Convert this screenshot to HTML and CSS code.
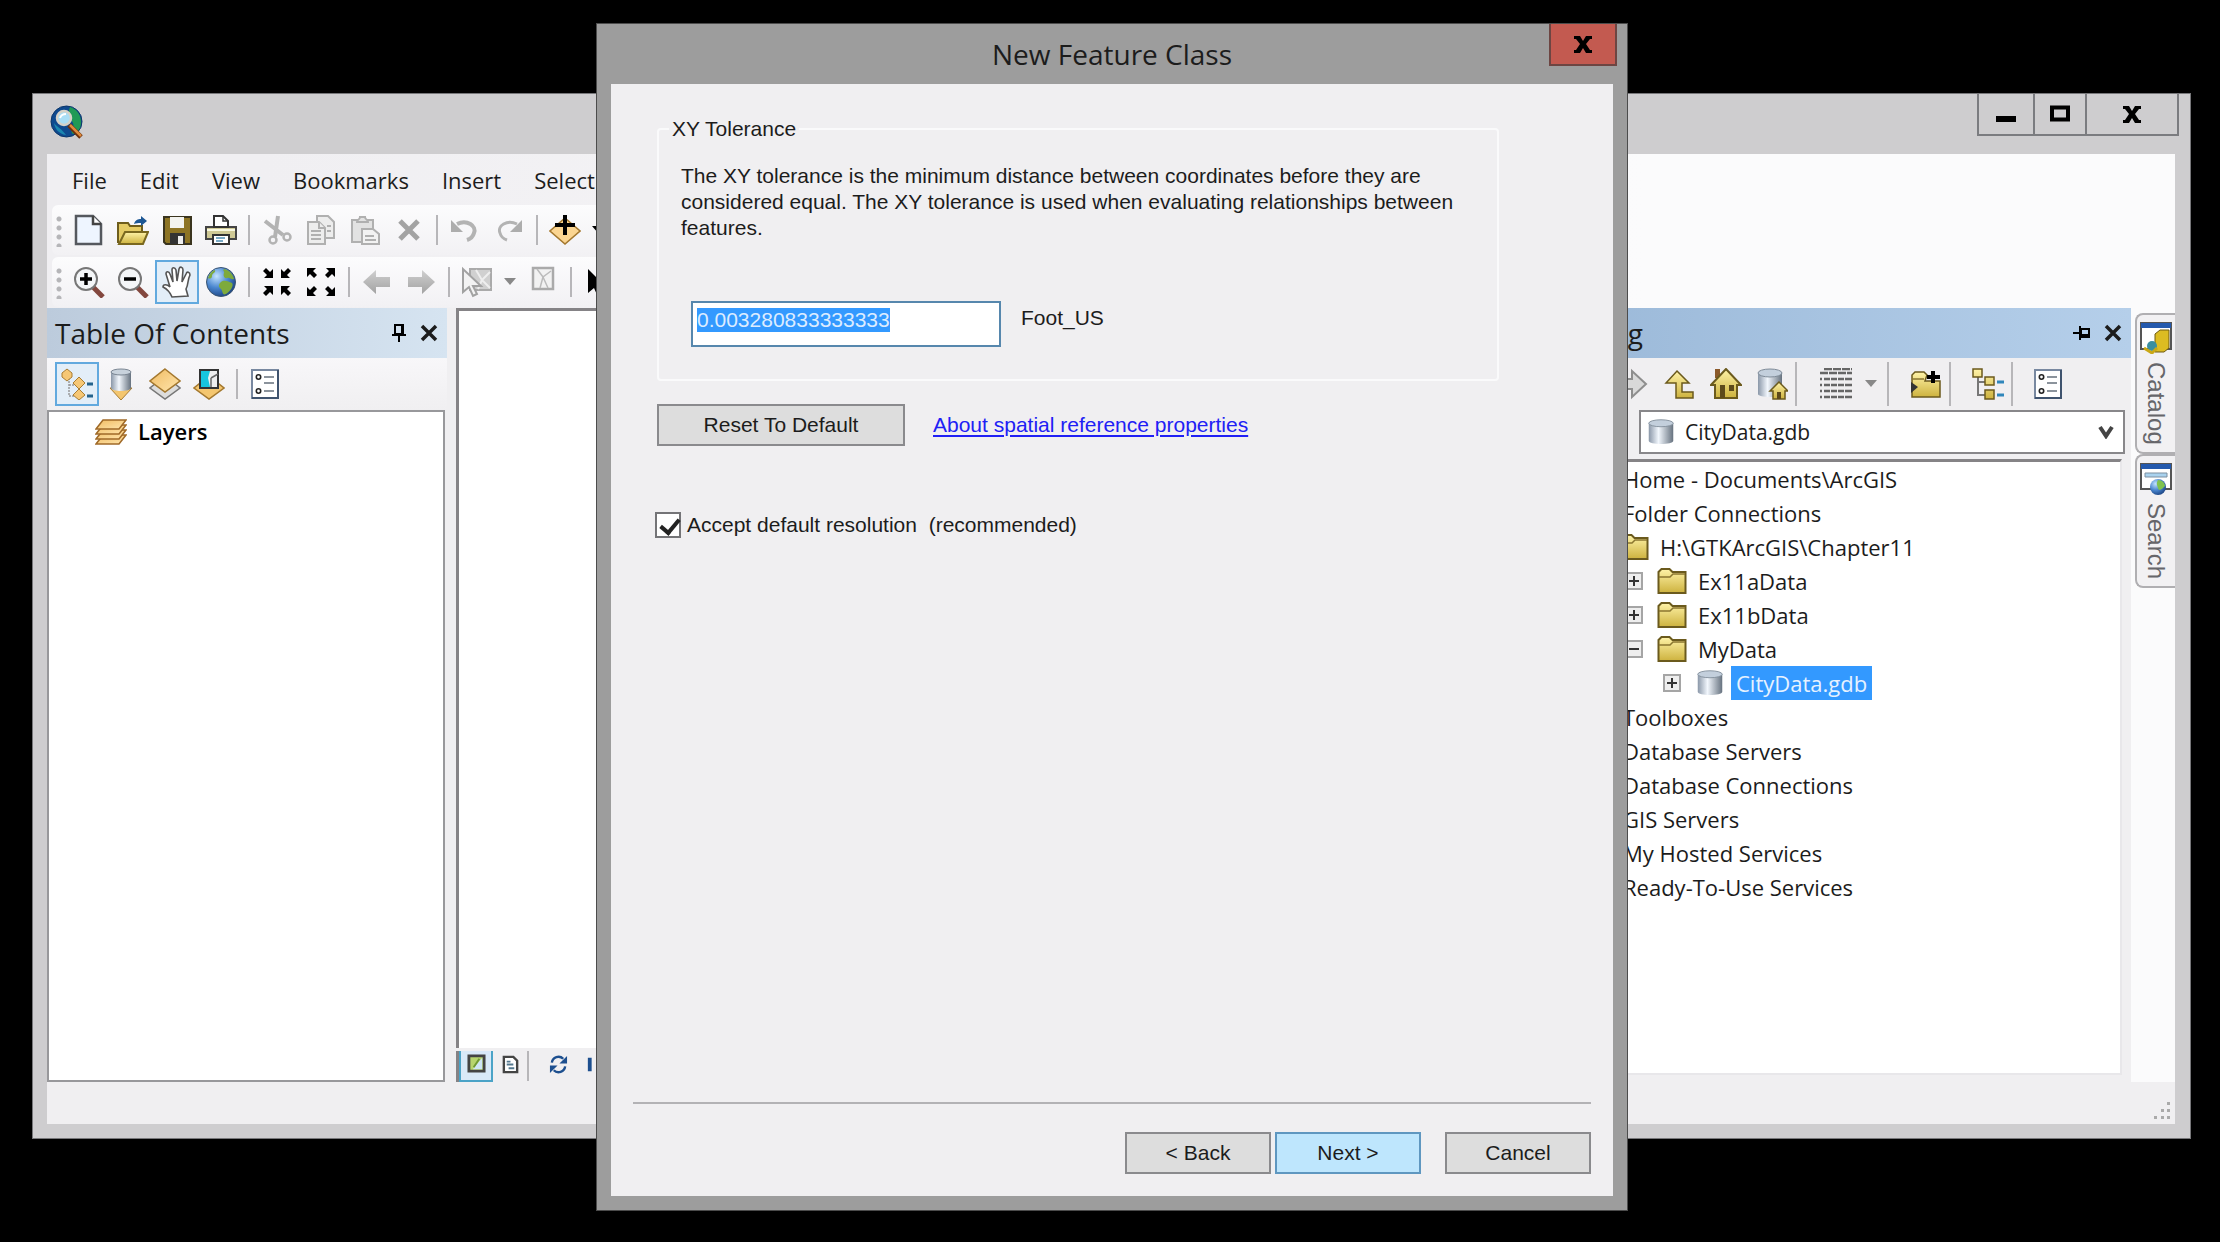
FILE: index.html
```html
<!DOCTYPE html>
<html lang="en">
<head>
<meta charset="utf-8">
<title>New Feature Class</title>
<link rel="stylesheet" href="styles.css">
</head>
<body>
<svg class="defs" aria-hidden="true">
  <defs>
    <linearGradient id="gold" x1="0" y1="0" x2="0" y2="1"><stop offset="0" stop-color="#fff3a8"/><stop offset="1" stop-color="#cdb23e"/></linearGradient>
    <linearGradient id="amber" x1="0" y1="0" x2="1" y2="1"><stop offset="0" stop-color="#f0bb62"/><stop offset="1" stop-color="#ffe6ae"/></linearGradient>
    <linearGradient id="steel"><stop offset="0" stop-color="#8a97a8"/><stop offset=".4" stop-color="#f2f7fd"/><stop offset="1" stop-color="#66727f"/></linearGradient>
    <radialGradient id="sea" cx=".35" cy=".3" r=".8"><stop offset="0" stop-color="#c4e4ff"/><stop offset=".5" stop-color="#4a86cf"/><stop offset="1" stop-color="#153a78"/></radialGradient>
    <linearGradient id="grey" x1="0" y1="0" x2="0" y2="1"><stop offset="0" stop-color="#d0d0d0"/><stop offset="1" stop-color="#a2a2a2"/></linearGradient>
    <symbol id="cylinder" viewBox="0 0 32 32"><path d="M2 6v20c0 5 28 5 28 0V6z" fill="url(#steel)"/><ellipse cx="16" cy="6" rx="14" ry="4" fill="#c3cfdc" stroke="#7f8b98"/></symbol>
    <symbol id="folder" viewBox="0 0 30 28"><path d="M1.500 26V5l3-3h8l3 3h13v21z" fill="url(#gold)" stroke="#6b5a1d" stroke-width="2"/><path d="M2 10h11l3-3h12" fill="none" stroke="#8a7630" stroke-width="1.500"/></symbol>
    <symbol id="list" viewBox="0 0 32 32"><path d="M3 2h26v28H3z" fill="#fff" stroke="#7888a0" stroke-width="2"/><path d="M29 2v28H3" fill="none" stroke="#3f536e" stroke-width="2"/><circle cx="9.500" cy="9" r="2.200" fill="none" stroke="#222" stroke-width="1.600"/><circle cx="9.500" cy="23" r="2.200" fill="none" stroke="#222" stroke-width="1.600"/><path d="M15 9h10M15 15h10M15 23h10" stroke="#8b939c" stroke-width="2"/></symbol>
    <symbol id="globe" viewBox="0 0 32 32"><circle cx="16" cy="16" r="14.500" fill="url(#sea)" stroke="#3b5572"/><path d="M19 3c5 1 9 5 10 10-3 1-4-2-7-1s-4-3-3-5-2-2 0-4zM15 17c3-4 8-2 12 0 2 2-1 8-6 11-4 2-3-3-5-5s-3-3-1-6zM3 12c1-4 4-7 7-8 1 3-3 3-3 6s-3 3-4 2z" fill="#7eaa3c"/></symbol>
    <symbol id="cross" viewBox="0 0 20 20"><path d="M3 3l14 14M17 3L3 17" stroke="currentColor" stroke-width="3.500"/></symbol>
    <symbol id="down" viewBox="0 0 12 8"><path d="M0 0h12L6 7z" fill="currentColor"/></symbol>
    <symbol id="plus" viewBox="0 0 18 18"><path d="M1 1h16v16H1z" fill="#eee" stroke="#a5a5a5" stroke-width="2"/><path d="M4 9h10M9 4v10" stroke="#333" stroke-width="2"/></symbol>
    <symbol id="minus" viewBox="0 0 18 18"><path d="M1 1h16v16H1z" fill="#eee" stroke="#a5a5a5" stroke-width="2"/><path d="M4 9h10" stroke="#333" stroke-width="2"/></symbol>
  </defs>
</svg>

<div class="desktop">
  <div class="window">
    <header class="titlebar">
      <svg class="app-icon" viewBox="0 0 34 34"><circle cx="16.500" cy="16.500" r="15.500" fill="#0f4a8f" stroke="#0b3569"/><path d="M20 2c7 2 11 8 11 15s-3 10-8 12c-4-2 2-7 0-11s-6-9-3-16z" fill="#1f9a55"/><path d="M4 18c3 4 8 6 12 12C9 29 5 24 4 18z" fill="#1b87b0"/><path d="M19 20l12 12" stroke="#6b300d" stroke-width="5"/><path d="M20 20l11 11" stroke="#e08a3d" stroke-width="2.500"/><circle cx="14" cy="13" r="7" fill="#a9def5" stroke="#d6d2c8" stroke-width="2.500"/><path d="M10 13c1-3 3-4 6-4" stroke="#fff" stroke-width="2" fill="none"/></svg>
      <div class="window-controls">
        <button class="control control-min" aria-label="Minimize"><svg width="20" height="18"><path d="M0 11h20v6H0z"/></svg></button>
        <button class="control control-max" aria-label="Maximize"><svg width="20" height="18"><path d="M2 2.500h16v12H2z" fill="none" stroke="#000" stroke-width="4"/></svg></button>
        <button class="control control-close" aria-label="Close"><svg width="18" height="17" viewBox="0 0 18 17"><path d="M0 0h6l3 5 3-5h6v3h-2l-4 5 4 6h2v3h-6l-3-5-3 5H0v-3h2l4-6-4-5H0z"/></svg></button>
      </div>
    </header>

    <div class="client">
      <div class="bars">
        <nav class="menu">
          <button>File</button><button>Edit</button><button>View</button><button>Bookmarks</button><button>Insert</button><button>Selection</button>
        </nav>
        <div class="toolbar">
          <span class="grip"></span>
          <button class="tool" aria-label="New"><svg viewBox="0 0 32 32"><path d="M3 2h17l8 8v20H3z" fill="#eef5ff" stroke="#55585e" stroke-width="2.500"/><path d="M20 2v8h8" fill="#fff" stroke="#444" stroke-width="2.500"/></svg></button>
          <button class="tool" aria-label="Open"><svg viewBox="0 0 32 32"><path d="M1 29V9h10l2 3h12v6" fill="#e5cc65" stroke="#6e5d1c" stroke-width="2"/><path d="M2 30l6-12h23l-5 12z" fill="url(#gold)" stroke="#7a681f" stroke-width="2"/><path d="M17 10c1-4 4-5 7-5V2l6 5-6 5V9c-3 0-5 0-7 1z" fill="#1d5794"/></svg></button>
          <button class="tool" aria-label="Save"><svg viewBox="0 0 32 32"><path d="M3 3h27v27H5l-2-2z" fill="#8d7424" stroke="#3a341e" stroke-width="2"/><path d="M9 3h14v11H9z" fill="#f3f3ef"/><path d="M9 19h15v11H9z" fill="#333"/><path d="M17 22h5v8h-5z" fill="#eee"/></svg></button>
          <button class="tool" aria-label="Print"><svg viewBox="0 0 32 32"><path d="M1 13h30v12H1z" fill="#cfc995" stroke="#444" stroke-width="2"/><path d="M2 16h28" stroke="#f8f8e0" stroke-width="2"/><path d="M9 13V2h9l5 5v6z" fill="#fff" stroke="#333" stroke-width="2"/><path d="M18 2v5h5" fill="none" stroke="#333" stroke-width="1.500"/><path d="M8 21h16v9H8z" fill="#fff" stroke="#333" stroke-width="2"/><path d="M11 24h9M11 27h7" stroke="#4d8fb5" stroke-width="1.500"/></svg></button>
          <span class="sep"></span>
          <button class="tool" disabled aria-label="Cut"><svg viewBox="0 0 32 32" fill="none" stroke="#b3b3b3"><path d="M4 7l18 14M17 2l-3 21" stroke-width="4"/><circle cx="12" cy="26" r="3.500" stroke-width="2.500"/><circle cx="26" cy="23" r="3.500" stroke-width="2.500"/></svg></button>
          <button class="tool" disabled aria-label="Copy"><svg viewBox="0 0 32 32" fill="#ededed" stroke="#b0b0b0" stroke-width="2"><path d="M12 2h11l6 6v16H12z"/><path d="M3 8h11l6 6v16H3z"/><path d="M14 8v6h6M6 17h10M6 21h10M6 25h10M22 12h4M22 17h4" /></svg></button>
          <button class="tool" disabled aria-label="Paste"><svg viewBox="0 0 32 32" fill="#e2e2e2" stroke="#b0b0b0" stroke-width="2"><path d="M3 6h21v22H3z"/><path d="M8 8c0-3 3-2 3-5h5c0 3 3 2 3 5z"/><path d="M13 15h11l6 5v10H13z" fill="#f2f2f2"/><path d="M16 22h9M16 26h11"/></svg></button>
          <button class="tool" disabled aria-label="Delete"><svg viewBox="0 0 32 32"><path d="M7 7l18 18M25 7L7 25" stroke="#a3a3a3" stroke-width="5"/></svg></button>
          <span class="sep"></span>
          <button class="tool" disabled aria-label="Undo"><svg viewBox="0 0 32 32"><path d="M8 10c10-5 20 2 17 9-1 4-4 6-7 7" fill="none" stroke="#b3b3b3" stroke-width="4"/><path d="M2 6v12h12z" fill="#adadad"/></svg></button>
          <button class="tool" disabled aria-label="Redo"><svg viewBox="0 0 32 32"><path d="M24 10C14 5 4 12 7 19c1 4 4 6 7 7" fill="none" stroke="#b3b3b3" stroke-width="3"/><path d="M29 6v12H17z" fill="#adadad"/></svg></button>
          <span class="sep"></span>
          <button class="tool" aria-label="Add data"><svg viewBox="0 0 32 32"><path d="M16 4l15 13-15 13L1 17z" fill="#fbd591" stroke="#a4782e" stroke-width="1.500"/><path d="M16 1v20M6 11h20" stroke="#000" stroke-width="4"/></svg></button>
          <svg class="caret dark"><use href="#down"/></svg>
        </div>
        <div class="toolbar">
          <span class="grip"></span>
          <button class="tool" aria-label="Zoom in"><svg viewBox="0 0 32 32"><path d="M20 21l10 10" stroke="#83473e" stroke-width="5"/><circle cx="13" cy="13" r="11" fill="#f4f6f8" stroke="#777" stroke-width="2"/><path d="M7 13h12M13 7v12" stroke="#000" stroke-width="3.500"/></svg></button>
          <button class="tool" aria-label="Zoom out"><svg viewBox="0 0 32 32"><path d="M20 21l10 10" stroke="#83473e" stroke-width="5"/><circle cx="13" cy="13" r="11" fill="#f4f6f8" stroke="#777" stroke-width="2"/><path d="M7 13h12" stroke="#000" stroke-width="3.500"/></svg></button>
          <button class="tool active" aria-label="Pan"><svg viewBox="0 0 32 32"><path d="M11 31c-2-5-5-8-9-10 0-3 4-3 7 0L5 8c0-3 3-3 4 0l3 8-1-12c0-3 3-3 4 0l1 11 2-12c1-3 4-2 4 1l-1 12 4-8c1-3 4-2 4 1-3 6-1 8-4 14l2 7z" fill="#fff" stroke="#555" stroke-width="1.600"/></svg></button>
          <button class="tool" aria-label="Full extent"><svg><use href="#globe"/></svg></button>
          <span class="sep"></span>
          <button class="tool" aria-label="Fixed zoom in"><svg viewBox="0 0 32 32"><path d="M12 3v9H3l3-3-4-4 3-3 4 4zM20 3v9h9l-3-3 4-4-3-3-4 4zM12 29v-9H3l3 3-4 4 3 3 4-4zM20 29v-9h9l-3 3 4 4-3 3-4-4z"/></svg></button>
          <button class="tool" aria-label="Fixed zoom out"><svg viewBox="0 0 32 32"><path d="M2 11V2h9L8 5l4 4-3 3-4-4zM30 11V2h-9l3 3-4 4 3 3 4-4zM2 21v9h9l-3-3 4-4-3-3-4 4zM30 21v9h-9l3-3-4-4 3-3 4 4z"/></svg></button>
          <span class="sep"></span>
          <button class="tool" disabled aria-label="Back"><svg viewBox="0 0 32 32"><path d="M2 16L15 4v7h14v10H15v7z" fill="url(#grey)"/></svg></button>
          <button class="tool" disabled aria-label="Forward"><svg viewBox="0 0 32 32"><path d="M30 16L17 4v7H3v10h14v7z" fill="url(#grey)"/></svg></button>
          <span class="sep"></span>
          <button class="tool" disabled aria-label="Select features"><svg viewBox="0 0 32 32"><path d="M9 3h21v21H9z" fill="#d0d0d0" stroke="#aaa" stroke-width="2"/><path d="M15 4l6 10-4 9M29 6l-8 8 8 8" fill="none" stroke="#eee" stroke-width="2"/><path d="M2 3v23l6-5 4 9 4-2-4-8h8z" fill="#f3f3f3" stroke="#a2a2a2" stroke-width="2"/></svg></button>
          <svg class="caret"><use href="#down"/></svg>
          <button class="tool" disabled aria-label="Clear selection"><svg viewBox="0 0 32 32"><path d="M6 2h20v21H6z" fill="#f2f2f2" stroke="#aaa" stroke-width="2.500"/><path d="M10 3l6 8-3 11M24 5l-8 6 5 11" fill="none" stroke="#bbb" stroke-width="1.500"/></svg></button>
          <span class="sep"></span>
          <button class="tool" aria-label="Select elements"><svg viewBox="0 0 32 32"><path d="M5 3v24l6-5 4 9 4-2-4-8h8z"/></svg></button>
        </div>
      </div>

      <div class="workspace">
        <section class="toc">
          <div class="pane-title toc-title">
            <h2>Table Of Contents</h2>
            <button aria-label="Auto hide"><svg width="16" height="18" viewBox="0 0 16 18"><path d="M4 1h8v9H4z" fill="none" stroke="#000" stroke-width="2"/><path d="M10 1h3v9h-3zM1 10h14v2H1zM7 12h2v6H7z"/></svg></button>
            <button aria-label="Close"><svg width="20" height="20"><use href="#cross"/></svg></button>
          </div>
          <div class="pane-tools">
            <button class="tool active" aria-label="List by drawing order"><svg viewBox="0 0 32 32"><path d="M8 10v18h12M8 17h10" fill="none" stroke="#999" stroke-width="1.500" stroke-dasharray="2 1"/><g fill="#f6c775" stroke="#a97d33"><path d="M6 1l5 4v4l-5 4-5-4V5z"/><path d="M18 9l6 6-6 6-6-6zM18 21l6 6-6 5-6-5z"/></g><path d="M26 16h6M26 28h6" stroke="#25638c" stroke-width="3"/></svg></button>
            <button class="tool" aria-label="List by source"><svg viewBox="0 0 32 32"><path d="M5 20h22L16 32z" fill="#f4c66f" stroke="#a97d33"/><path d="M6 4v16c0 4 20 4 20 0V4z" fill="url(#steel)"/><ellipse cx="16" cy="4" rx="10" ry="3" fill="#c8d2dc" stroke="#7a8592"/></svg></button>
            <button class="tool" aria-label="List by visibility"><svg viewBox="0 0 32 32"><path d="M16 8l15 12-15 11L1 20z" fill="#ddd" stroke="#777" stroke-width="1.500"/><path d="M16 1l15 12-15 11L1 13z" fill="url(#amber)" stroke="#a4782e" stroke-width="1.500"/></svg></button>
            <button class="tool" aria-label="List by selection"><svg viewBox="0 0 32 32"><path d="M16 8l15 12-15 11L1 20z" fill="#f4c66f" stroke="#a4782e" stroke-width="1.500"/><path d="M7 2h18v18H7z" fill="#eee" stroke="#333" stroke-width="2"/><path d="M8 3h9l-2 7 2 9H8z" fill="#17c5dd"/><path d="M18 10l7-4M18 10v9" stroke="#666" stroke-width="1.500"/></svg></button>
            <span class="sep"></span>
            <button class="tool" aria-label="Options"><svg><use href="#list"/></svg></button>
          </div>
          <div class="layers">
            <svg viewBox="0 0 32 26"><g fill="url(#amber)" stroke="#a06a28" stroke-width="1.500"><path d="M8 16h23l-7 9H1z"/><path d="M8 11h23l-7 9H1z"/><path d="M8 6h23l-7 9H1z"/><path d="M8 1h23l-7 9H1z"/></g></svg>
            <strong>Layers</strong>
          </div>
        </section>

        <section class="map">
          <div class="canvas"></div>
          <div class="view-bar">
            <button class="view active" aria-label="Data view"><svg viewBox="0 0 20 20"><path d="M2 2h16v16H2z" fill="#b7d56d" stroke="#444" stroke-width="3"/><path d="M16 4L6 16h10z" fill="#cfe6f5"/><path d="M13 5L7 14" stroke="#6f9a35" stroke-width="2"/></svg></button>
            <button class="view" aria-label="Layout view"><svg viewBox="0 0 20 20"><path d="M3 2h10l4 4v12H3z" fill="#fff" stroke="#444" stroke-width="2.500"/><path d="M6 7h4M6 10h7M8 14h6" stroke="#54788f" stroke-width="2"/></svg></button>
            <span class="sep"></span>
            <button class="view refresh" aria-label="Refresh"><svg viewBox="0 0 20 20"><path d="M3 8a7 7 0 0 1 12-4M17 12a7 7 0 0 1-12 4" fill="none" stroke="#1d4f8f" stroke-width="2.500"/><path d="M19 1v8h-8zM1 19v-8h8z" fill="#1d4f8f"/></svg></button>
            <button class="view pause" aria-label="Pause drawing"><svg viewBox="0 0 20 20"><path d="M3 3h4v14H3zM12 3h4v14h-4z" fill="#1d4f8f"/></svg></button>
          </div>
        </section>

        <section class="catalog">
          <div class="pane-title catalog-title">
            <h2>Catalog</h2>
            <button aria-label="Pin"><svg width="18" height="16" viewBox="0 0 18 16"><path d="M8 4h8v8H8z" fill="none" stroke="#000" stroke-width="2"/><path d="M8 9h9v3H8zM6 1h2v14H6zM0 7h6v2H0z"/></svg></button>
            <button aria-label="Close"><svg width="20" height="20"><use href="#cross"/></svg></button>
          </div>
          <div class="pane-tools catalog-tools">
            <button class="tool" disabled aria-label="Forward"><svg viewBox="0 0 32 32"><path d="M2 11h12V3l14 13-14 13v-8H2z" fill="#d9d9d9" stroke="#8e8e8e" stroke-width="2"/></svg></button>
            <button class="tool" aria-label="Up one level"><svg viewBox="0 0 32 32"><path d="M13 3l12 12h-7v9h11v6H12V15H2z" fill="url(#gold)" stroke="#6b5a1d" stroke-width="1.500"/></svg></button>
            <button class="tool" aria-label="Home folder"><svg viewBox="0 0 32 32"><path d="M5 1h5v9H5z" fill="#8b5a2b"/><path d="M16 1L1 17h4v13h22V17h4z" fill="url(#gold)" stroke="#6b5a1d" stroke-width="2"/><path d="M10 17h5v13h-5zM19 17h5v6h-5z" fill="#5d4a1b"/></svg></button>
            <button class="tool" aria-label="Default geodatabase"><svg viewBox="0 0 32 32"><path d="M2 5v21c0 4 24 4 24 0V5z" fill="url(#steel)"/><ellipse cx="14" cy="5" rx="12" ry="4" fill="#c3cfdc" stroke="#7f8b98"/><path d="M23 14l-9 9h3v8h12v-8h3z" fill="url(#gold)" stroke="#6b5a1d" stroke-width="1.500"/><path d="M21 24h4v7h-4z" fill="#5d4a1b"/></svg></button>
            <span class="sep tall"></span>
            <button class="tool table-tool" aria-label="Contents view"><svg viewBox="0 0 32 32" stroke="#666" fill="none"><path d="M4 1h28M0 5h32" stroke-width="2.500" stroke-dasharray="8 1"/><path d="M0 11h32M0 17h32M0 23h32M0 29h32" stroke-width="2.500" stroke-dasharray="2 2 6 1 6 1 6 1 7 0"/></svg></button>
            <svg class="caret"><use href="#down"/></svg>
            <span class="sep tall"></span>
            <button class="tool connect" aria-label="Connect to folder"><svg viewBox="0 0 32 32"><path d="M2 29V7l3-3h9l3 3-2 6h15v16z" fill="url(#gold)" stroke="#6b5a1d" stroke-width="1.500"/><path d="M2 11h12" stroke="#8a7630" stroke-width="1.500"/><path d="M1 14l7 5-7 6z" fill="#333"/><path d="M23 3v12M17 9h13" stroke="#000" stroke-width="4"/></svg></button>
            <span class="sep tall"></span>
            <button class="tool connect" aria-label="Catalog tree"><svg viewBox="0 0 32 32"><path d="M6 8v19h10M6 14h10" fill="none" stroke="#777" stroke-width="2"/><path d="M1 1h9v8H1zM13 9h9v8h-9zM13 22h9v9h-9z" fill="url(#gold)" stroke="#6b5a1d" stroke-width="1.500"/><path d="M25 14h7M25 27h7" stroke="#2f86bb" stroke-width="3"/></svg></button>
            <span class="sep tall"></span>
            <button class="tool options" aria-label="Options"><svg><use href="#list"/></svg></button>
          </div>
          <label class="location">
            <svg class="db"><use href="#cylinder"/></svg>
            <select aria-label="Location"><option>CityData.gdb</option></select>
            <svg class="chevron" viewBox="0 0 16 14"><path d="M2 2l6 9 6-9" fill="none" stroke="#444" stroke-width="4"/></svg>
          </label>
          <ul class="tree">
            <li class="level0"><span>Home - Documents\ArcGIS</span></li>
            <li class="level0"><span>Folder Connections</span></li>
            <li class="level1"><svg class="folder"><use href="#folder"/></svg><span>H:\GTKArcGIS\Chapter11</span></li>
            <li class="level2"><svg class="toggle"><use href="#plus"/></svg><svg class="folder"><use href="#folder"/></svg><span>Ex11aData</span></li>
            <li class="level2"><svg class="toggle"><use href="#plus"/></svg><svg class="folder"><use href="#folder"/></svg><span>Ex11bData</span></li>
            <li class="level2"><svg class="toggle"><use href="#minus"/></svg><svg class="folder"><use href="#folder"/></svg><span>MyData</span></li>
            <li class="level3"><svg class="toggle"><use href="#plus"/></svg><svg class="folder"><use href="#cylinder"/></svg><span class="selected">CityData.gdb</span></li>
            <li class="level0"><span>Toolboxes</span></li>
            <li class="level0"><span>Database Servers</span></li>
            <li class="level0"><span>Database Connections</span></li>
            <li class="level0"><span>GIS Servers</span></li>
            <li class="level0"><span>My Hosted Services</span></li>
            <li class="level0"><span>Ready-To-Use Services</span></li>
          </ul>
        </section>

        <aside class="dock">
          <button class="dock-tab"><svg viewBox="0 0 32 32"><path d="M1 1h30v26H1z" fill="#fff" stroke="#555" stroke-width="2"/><path d="M1 1h30v5H1z" fill="#2459ad"/><path d="M15 12l5-4h9v18l-5 4h-9z" fill="#dcbc22" stroke="#6e5a10"/><circle cx="12" cy="24" r="5" fill="#3a8fa0"/><path d="M4 26l8 5 5-5" fill="none" stroke="#c9a817" stroke-width="3"/></svg>Catalog</button>
          <button class="dock-tab"><svg viewBox="0 0 32 32"><path d="M1 1h30v25H1z" fill="#fff" stroke="#555" stroke-width="2"/><path d="M1 1h30v5H1z" fill="#2459ad"/><path d="M5 10h22v4H5z" fill="#a9d2ee" stroke="#7c8fa0"/><circle cx="18" cy="24" r="8" fill="url(#sea)"/><path d="M18 17c4 0 7 3 7 6-3 3-6 6-7 2s-2-4 0-8z" fill="#7fc24e"/></svg>Search</button>
        </aside>
      </div>

      <footer class="status">
        <svg width="16" height="18" fill="#aaa"><path d="M13 0h3v3h-3zM7 7h3v3H7zM13 7h3v3h-3zM0 14h3v3H0zM7 14h3v3H7zM13 14h3v3h-3z"/></svg>
      </footer>
    </div>
  </div>

  <form class="dialog" role="dialog" aria-labelledby="dialog-title">
    <header class="dialog-head">
      <h1 id="dialog-title">New Feature Class</h1>
      <button type="button" class="dialog-close" aria-label="Close"><svg width="18" height="17" viewBox="0 0 18 17"><path d="M0 0h6l3 5 3-5h6v3h-2l-4 5 4 6h2v3h-6l-3-5-3 5H0v-3h2l4-6-4-5H0z"/></svg></button>
    </header>
    <div class="dialog-body">
      <div class="page">
        <fieldset>
          <legend>XY Tolerance</legend>
          <p>The XY tolerance is the minimum distance between coordinates before they are considered equal. The XY tolerance is used when evaluating relationships between features.</p>
          <div class="value">
            <input type="text" id="tolerance" value="0.003280833333333">
            <label for="tolerance">Foot_US</label>
          </div>
        </fieldset>
        <div class="reset">
          <button type="button" class="push wide">Reset To Default</button>
          <a href="#">About spatial reference properties</a>
        </div>
        <label class="accept"><input type="checkbox" checked><span>Accept default resolution &nbsp;(recommended)</span></label>
      </div>
      <div class="actions">
        <button type="button" class="push">&lt; Back</button>
        <button type="button" class="push next">Next &gt;</button>
        <button type="button" class="push cancel">Cancel</button>
      </div>
    </div>
  </form>
</div>
<script>
  document.getElementById('tolerance').select();
</script>
</body>
</html>
```
FILE: styles.css
```css
* { box-sizing: border-box; }
body {
  margin: 0;
  background: #000;
  color: #1c1c1c;
  font-family: "Open Sans", "Noto Sans", sans-serif;
  font-size: 22px;
}
button, input, select { font: inherit; color: inherit; }
button { margin: 0; padding: 0; border: 0; background: none; }
svg { display: block; flex: none; }
h1, h2, p, ul { margin: 0; padding: 0; }
h1, h2 { font-size: 28px; font-weight: 400; white-space: nowrap; }
.defs { position: absolute; width: 0; height: 0; }

.desktop { position: relative; min-height: 100vh; overflow: hidden; }

/* Main application window */
.window {
  position: absolute;
  inset: 93px 29px 103px 32px;
  display: flex;
  flex-direction: column;
  padding: 0 15px 14px 14px;
  border: 1px solid #77777a;
  background: #cecdcf;
}
.titlebar {
  display: flex;
  justify-content: space-between;
  align-items: flex-start;
  height: 60px;
  flex: none;
}
.app-icon { width: 34px; height: 34px; margin: 11px 0 0 3px; }
.window-controls {
  display: flex;
  height: 42px;
  margin-right: -4px;
  border: 2px solid #7b7c80;
  border-top: 0;
}
.control { display: grid; place-items: center; width: 54px; }
.control + .control { border-left: 2px solid #7b7c80; }
.control-max { width: 52px; }
.control-close { width: 92px; }

.client { flex: 1; display: flex; flex-direction: column; min-height: 0; background: #f0eff1; }
.bars { flex: none; height: 154px; background: linear-gradient(90deg, #f0eff2 10%, #f5f4f6 45%, #fbfbfc 75%); }
.menu { display: flex; gap: 33px; height: 51px; padding-left: 25px; }
.toolbar {
  display: flex;
  align-items: center;
  width: 50%;
  height: 50px;
  margin: 0 0 2px 5px;
  padding-left: 1px;
  border-radius: 6px;
  background: linear-gradient(#fcfcfd, #f2f1f4);
}
.grip {
  width: 14px;
  height: 32px;
  margin-top: 2px;
  background: radial-gradient(circle at 6px 4px, #b5b5b8 2px, transparent 3px) 0 0 / 14px 9px repeat-y;
}
.tool { display: grid; place-items: center; flex: none; width: 44px; height: 44px; }
.tool svg { width: 32px; height: 32px; }
.tool.active { border: 2px solid #62a9de; background: #e3eef8; }
.sep { flex: none; width: 2px; height: 30px; margin: 0 5px; background: #b7b6b9; }
.caret { width: 12px; height: 8px; margin: 0 5px; color: #888; }
.caret.dark { color: #000; }

.workspace { flex: 1; display: flex; min-height: 0; }
.pane-title { display: flex; align-items: center; gap: 12px; height: 50px; flex: none; }
.pane-title h2 { flex: 1; }
.pane-tools { display: flex; align-items: center; height: 52px; flex: none; }

.toc { display: flex; flex-direction: column; flex: none; width: 400px; }
.toc-title { padding: 0 8px; background: linear-gradient(90deg, #bccbdc, #d6e4f1); }
.toc .pane-tools { padding-left: 8px; background: linear-gradient(#f8f7f9, #f0eff1); }
.layers {
  flex: 1;
  display: flex;
  align-items: flex-start;
  gap: 11px;
  margin-right: 2px;
  padding: 7px 46px;
  border: 2px solid #98989b;
  background: #fff;
}
.layers svg { width: 32px; height: 26px; }
.layers strong { line-height: 24px; font-weight: 600; color: #000; }

.map { flex: 1; display: flex; flex-direction: column; min-width: 0; margin-left: 9px; }
.canvas { flex: 1; border: 3px solid #858386; border-width: 3px 0 0 3px; background: #fff; }
.view-bar {
  display: flex;
  height: 31px;
  margin-top: 3px;
  border-left: 3px solid #858386;
}
.view { display: grid; place-items: center; width: 34px; height: 26px; }
.view svg { width: 19px; height: 19px; }
.view.active { height: 31px; padding-bottom: 4px; border: 2px solid #4ba3c7; border-top: 0; background: #d9e9f8; }
.view-bar .sep { margin: 0 12px 0 0; }
.view.pause { width: 38px; }

.catalog { display: flex; flex-direction: column; flex: none; width: 586px; }
.catalog-title { padding: 0 8px 0 0; background: linear-gradient(90deg, #9ab8d8, #b5cfea); }
.catalog-tools { justify-content: flex-end; padding-right: 53px; }
.catalog-tools .tool { width: 46px; padding-left: 10px; }
.catalog-tools .table-tool { width: 58px; }
.catalog-tools .connect { width: 50px; padding-left: 14px; }
.catalog-tools .options { width: 60px; padding-left: 0; }
.tall { height: 44px; }
.location {
  display: flex;
  align-items: center;
  height: 44px;
  flex: none;
  margin: 0 6px 0 94px;
  padding: 0 9px 0 6px;
  border: 2px solid #88878a;
  background: #fff;
}
.db { width: 28px; height: 28px; }
.location select {
  flex: 1;
  height: 40px;
  padding: 0 10px;
  border: 0;
  background: none;
  appearance: none;
  font-size: 21px;
}
.chevron { width: 16px; height: 14px; }
.tree {
  flex: 1;
  margin: 5px 9px 7px 0;
  border: solid #e8e7ea;
  border-width: 3px 2px 2px 0;
  border-top-color: #858386;
  background: #fff;
  list-style: none;
}
.tree li { display: flex; align-items: center; height: 34px; white-space: nowrap; }
.tree span { padding: 0 5px; line-height: 34px; }
.tree .selected { background: #3399ff; color: #e6f2ff; }
.level0 { padding-left: 73px; }
.level1 { padding-left: 74px; }
.level2 { padding-left: 80px; }
.level3 { padding-left: 118px; }
.toggle { width: 18px; height: 18px; margin-right: 14px; }
.folder { width: 30px; height: 28px; margin-right: 6px; }

.dock { display: flex; flex-direction: column; align-items: flex-end; flex: none; width: 44px; padding-top: 5px; background: #fbfbfc; }
.dock-tab {
  display: flex;
  align-items: center;
  gap: 8px;
  width: 40px;
  padding: 7px 0;
  border: 2px solid #b0afb2;
  border-right: 0;
  border-radius: 8px 0 0 8px;
  background: #f2f1f3;
  color: #66666a;
  font: 24px/28px "Liberation Sans", Arial, sans-serif;
  writing-mode: vertical-rl;
}
.dock-tab svg { width: 32px; height: 32px; }
.status { display: flex; justify-content: flex-end; align-items: flex-end; flex: none; height: 42px; padding: 4px 5px; }

/* Dialog */
.dialog {
  position: absolute;
  inset: 23px auto 31px calc(50% - 514px);
  width: 1032px;
  display: flex;
  flex-direction: column;
  padding: 0 14px 14px;
  border: 1px solid #4c4c4c;
  background: #9d9d9d;
  font: 21px/26px "Liberation Sans", Arial, sans-serif;
}
.dialog-head { position: relative; height: 60px; flex: none; display: grid; place-items: center; }
.dialog-head h1 { font-family: "Open Sans", "Noto Sans", sans-serif; }
.dialog-close {
  position: absolute;
  top: 0;
  right: -4px;
  display: grid;
  place-items: center;
  width: 68px;
  height: 42px;
  border: 2px solid #6d4542;
  border-top: 0;
  background: #c35a50;
}
.dialog-body { flex: 1; display: flex; flex-direction: column; padding: 32px 22px 22px; background: #f0eff1; }
.page { flex: 1; padding: 0 92px 0 24px; }
fieldset {
  min-width: 0;
  height: 265px;
  margin: 0;
  padding: 21px 14px 0 22px;
  border: 2px solid #e2e1e4;
  border-color: #fafafb;
  outline: 0;
  border-radius: 4px;
}
legend { margin-left: -12px; padding: 0 3px; }
.value { display: flex; gap: 20px; margin: 60px 0 0 10px; }
.value input {
  width: 310px;
  height: 46px;
  padding: 0 4px 8px;
  border: 2px solid #5687ad;
  border-radius: 0;
  outline: 0;
  background: #fff;
}
.value input::selection { background: #3399ff; color: #dcecff; }
.value label { padding-top: 4px; }
.reset { display: flex; align-items: center; gap: 28px; margin-top: 23px; }
.reset a { color: #2020f5; text-underline-offset: 3px; }
.push { width: 146px; height: 42px; border: 2px solid #8a8a8d; background: #dddddd; }
.push.wide { width: 248px; }
.push.next { border-color: #5f97c0; background: #bee6fd; }
.push.cancel { margin-left: 20px; }
.accept { display: flex; align-items: center; gap: 6px; margin: 66px 0 0 -2px; }
.accept input {
  position: relative;
  width: 26px;
  height: 26px;
  margin: 0;
  border: 2px solid #747477;
  appearance: none;
  background: #fff;
}
.accept input:checked::after {
  content: "";
  position: absolute;
  left: 7px;
  top: 1px;
  width: 8px;
  height: 15px;
  border: solid #222;
  border-width: 0 4px 4px 0;
  transform: rotate(40deg);
}
.actions {
  display: flex;
  justify-content: flex-end;
  gap: 4px;
  padding-top: 28px;
  border-top: 2px solid #b3b2b5;
}
```
